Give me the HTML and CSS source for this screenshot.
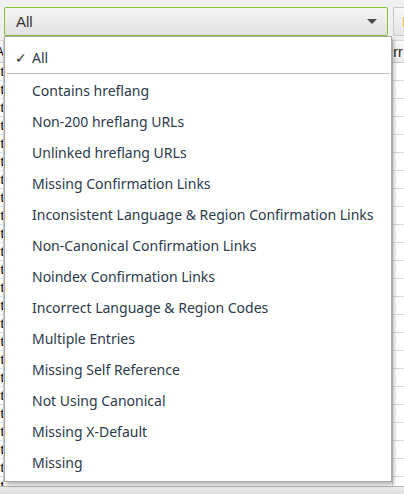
FILE: index.html
```html
<!DOCTYPE html>
<html>
<head>
<meta charset="utf-8">
<link rel="stylesheet" href="styles.css">
</head>
<body>
<div class="toolbar">
  <div class="select">
    <span class="select-text">All</span>
    <svg class="caret" width="10" height="5" viewBox="0 0 10 5"><path d="M0 0H10L5 5Z" fill="#4a4a4a"/></svg>
  </div>
  <div class="btn"><span class="btn-icon"></span></div>
</div>
<div class="grid">
  <div class="row head"><div class="c1">A</div><div class="c2"></div><div class="c3">Err</div></div>
  <div class="row"><div class="c1">t</div><div class="c2"></div><div class="c3"></div></div>
  <div class="row"><div class="c1">t</div><div class="c2"></div><div class="c3"></div></div>
  <div class="row"><div class="c1">t</div><div class="c2"></div><div class="c3"></div></div>
  <div class="row"><div class="c1">t</div><div class="c2"></div><div class="c3"></div></div>
  <div class="row"><div class="c1">t</div><div class="c2"></div><div class="c3"></div></div>
  <div class="row"><div class="c1">t</div><div class="c2"></div><div class="c3"></div></div>
  <div class="row"><div class="c1">t</div><div class="c2"></div><div class="c3"></div></div>
  <div class="row"><div class="c1">t</div><div class="c2"></div><div class="c3"></div></div>
  <div class="row"><div class="c1">t</div><div class="c2"></div><div class="c3"></div></div>
  <div class="row"><div class="c1">t</div><div class="c2"></div><div class="c3"></div></div>
  <div class="row"><div class="c1">t</div><div class="c2"></div><div class="c3"></div></div>
  <div class="row"><div class="c1">t</div><div class="c2"></div><div class="c3"></div></div>
  <div class="row"><div class="c1">t</div><div class="c2"></div><div class="c3"></div></div>
  <div class="row"><div class="c1">t</div><div class="c2"></div><div class="c3"></div></div>
  <div class="row"><div class="c1">t</div><div class="c2"></div><div class="c3"></div></div>
  <div class="row"><div class="c1">t</div><div class="c2"></div><div class="c3"></div></div>
  <div class="row"><div class="c1">t</div><div class="c2"></div><div class="c3"></div></div>
  <div class="row"><div class="c1">t</div><div class="c2"></div><div class="c3"></div></div>
  <div class="row"><div class="c1">t</div><div class="c2"></div><div class="c3"></div></div>
  <div class="row"><div class="c1">t</div><div class="c2"></div><div class="c3"></div></div>
  <div class="row"><div class="c1">t</div><div class="c2"></div><div class="c3"></div></div>
  <div class="row"><div class="c1">t</div><div class="c2"></div><div class="c3"></div></div>
  <div class="row"><div class="c1">t</div><div class="c2"></div><div class="c3"></div></div>
  <div class="row"><div class="c1">t</div><div class="c2"></div><div class="c3"></div></div>
</div>
<div class="hscroll"></div>

<div class="menu">
  <div class="item checked"><span class="check">&#10003;</span>All</div>
  <div class="sep"></div>
  <div class="item">Contains hreflang</div>
  <div class="item">Non-200 hreflang URLs</div>
  <div class="item">Unlinked hreflang URLs</div>
  <div class="item">Missing Confirmation Links</div>
  <div class="item">Inconsistent Language &amp; Region Confirmation Links</div>
  <div class="item">Non-Canonical Confirmation Links</div>
  <div class="item">Noindex Confirmation Links</div>
  <div class="item">Incorrect Language &amp; Region Codes</div>
  <div class="item">Multiple Entries</div>
  <div class="item">Missing Self Reference</div>
  <div class="item">Not Using Canonical</div>
  <div class="item">Missing X-Default</div>
  <div class="item">Missing</div>
</div>
</body>
</html>
```

FILE: styles.css
```css
html, body {
  margin: 0;
  padding: 0;
}
body {
  width: 404px;
  height: 494px;
  overflow: hidden;
  background: #f0f0f0;
  font-family: "Noto Sans", "Open Sans", sans-serif;
  position: relative;
}
.toolbar {
  display: flex;
  gap: 5px;
  padding: 7px 0 0 4px;
  height: 29px;
}
.select {
  box-sizing: border-box;
  width: 384px;
  height: 29px;
  flex: none;
  border: 1px solid #82c341;
  border-radius: 2px;
  background: linear-gradient(#f5f5f5, #e1e1e1);
  display: flex;
  align-items: center;
  justify-content: space-between;
  padding: 0 10px 0 11px;
  font-family: "Liberation Sans", Arial, sans-serif;
  font-size: 15px;
  color: #333;
}
.btn {
  box-sizing: border-box;
  width: 11px;
  flex: none;
  height: 29px;
  border: 1px solid #c8c8c8;
  border-right: none;
  border-radius: 2px 0 0 2px;
  background: linear-gradient(#f7f7f7, #e4e4e4);
  display: flex;
  align-items: center;
  padding-left: 9px;
  overflow: hidden;
}
.btn-icon {
  width: 4px;
  height: 10px;
  flex: none;
  background: #e9c646;
}
.grid {
  margin-top: 4px;
  height: 446px;
  overflow: hidden;
  background: #fff;
  font-family: "Liberation Sans", Arial, sans-serif;
  font-size: 13px;
  color: #111;
}
.row {
  display: flex;
  height: 18px;
  box-sizing: border-box;
  border-bottom: 1px solid #dcdcdc;
}
.row.head {
  height: 23px;
  background: linear-gradient(#fafafa, #ececec);
  border-top: 1px solid #d4d4d4;
  border-bottom: 1px solid #c8c8c8;
}
.c1 {
  width: 3px;
  overflow: hidden;
  direction: rtl;
  border-right: 1px solid #cfcfcf;
  line-height: 17px;
  text-indent: -1px;
  color: #000;
}
.head .c1 {
  line-height: 22px;
}
.c2 {
  width: 388px;
  border-right: 1px solid #d8d8d8;
}
.c3 {
  flex: 1;
  overflow: hidden;
  white-space: nowrap;
  line-height: 22px;
  font-size: 14px;
  text-indent: -9px;
  color: #1a1a1a;
}
.hscroll {
  height: 8px;
  border-top: 1px solid #b8b8b8;
  background: linear-gradient(#ececec, #dcdcdc);
}
.menu {
  position: absolute;
  top: 36px;
  left: 4px;
  width: 388px;
  height: 446px;
  box-sizing: border-box;
  background: #fff;
  border: 1px solid #a9a9a9;
  box-shadow: 2px 3px 4px rgba(0, 0, 0, 0.28);
  padding-top: 5px;
  color: #2c3a4b;
  font-size: 14px;
}
.item {
  height: 31px;
  line-height: 31px;
  padding-left: 27px;
  white-space: nowrap;
  position: relative;
}
.check {
  position: absolute;
  left: 10px;
  top: 0;
  font-size: 14px;
  color: #333;
}
.sep {
  height: 1px;
  margin: 0 1px 1px 2px;
  background: #c4c4c4;
}
```
